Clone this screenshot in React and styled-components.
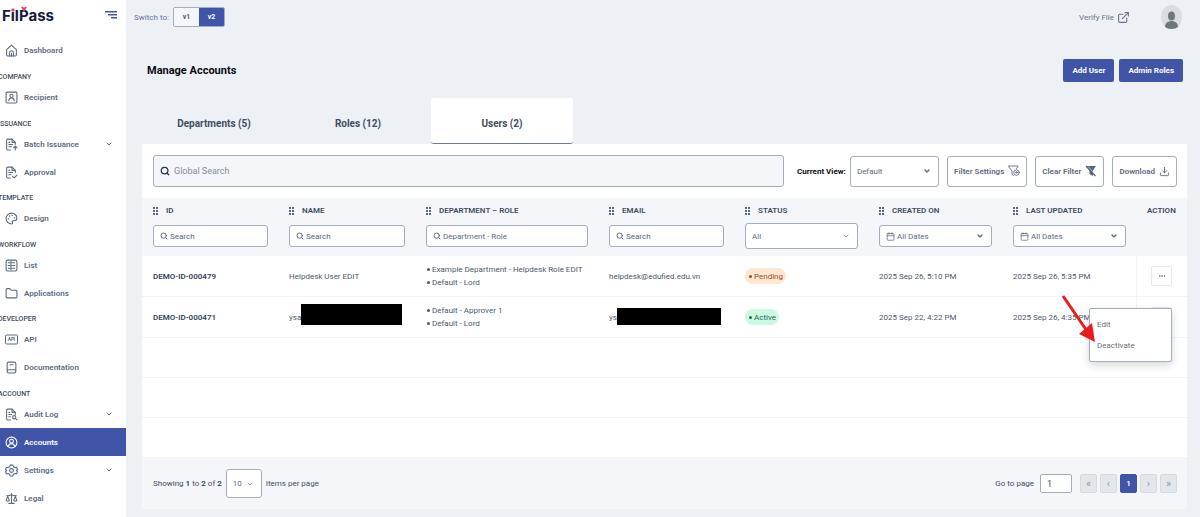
import React, { useState } from "react";
import styled, { createGlobalStyle } from "styled-components";
import {
  Palette,
  Folder,
  Scale,
  Search,
  ChevronDown,
  Ellipsis,
  ExternalLink,
  Download,
  Calendar,
} from "lucide-react";

const navSections = [
  { title: "", items: [{ label: "Dashboard", icon: "home" }] },
  { title: "COMPANY", items: [{ label: "Recipient", icon: "recipient" }] },
  {
    title: "ISSUANCE",
    items: [
      { label: "Batch Issuance", icon: "batch", open: true },
      { label: "Approval", icon: "approval" },
    ],
  },
  {
    title: "TEMPLATE",
    tight: true,
    items: [{ label: "Design", icon: "design" }],
  },
  {
    title: "WORKFLOW",
    items: [
      { label: "List", icon: "list" },
      { label: "Applications", icon: "folder" },
    ],
  },
  {
    title: "DEVELOPER",
    tight: true,
    items: [
      { label: "API", icon: "api" },
      { label: "Documentation", icon: "docs" },
    ],
  },
  {
    title: "ACCOUNT",
    items: [
      { label: "Audit Log", icon: "audit", open: true },
      { label: "Accounts", icon: "accounts", active: true },
      { label: "Settings", icon: "settings", open: true },
      { label: "Legal", icon: "legal" },
    ],
  },
];

const tabs = ["Departments (5)", "Roles (12)", "Users (2)"];

const columns = [
  { title: "ID", width: 136, type: "search", hint: "Search" },
  { title: "NAME", width: 137, type: "search", hint: "Search" },
  {
    title: "DEPARTMENT – ROLE",
    width: 183,
    type: "search",
    hint: "Department - Role",
  },
  { title: "EMAIL", width: 136, type: "search", hint: "Search" },
  { title: "STATUS", width: 134, type: "status" },
  { title: "CREATED ON", width: 134, type: "date" },
  { title: "LAST UPDATED", width: 134, type: "date" },
];

const users = [
  {
    id: "DEMO-ID-000479",
    name: "Helpdesk User EDIT",
    roles: ["Example Department - Helpdesk Role EDIT", "Default - Lord"],
    email: "helpdesk@edufied.edu.vn",
    status: "Pending",
    created: "2025 Sep 26, 5:10 PM",
    updated: "2025 Sep 26, 5:35 PM",
  },
  {
    id: "DEMO-ID-000471",
    name: "ysa",
    roles: ["Default - Approver 1", "Default - Lord"],
    email: "ys",
    hidden: true,
    status: "Active",
    created: "2025 Sep 22, 4:22 PM",
    updated: "2025 Sep 26, 4:35 PM",
  },
];

const Line = ({ children, size = 13, width = 2 }) => (
  <svg
    width={size}
    height={size}
    viewBox="0 0 24 24"
    fill="none"
    stroke="currentColor"
    strokeWidth={width}
    strokeLinecap="round"
    strokeLinejoin="round"
  >
    {children}
  </svg>
);

const filePath = "M10 22H5a2 2 0 0 1-2-2V4a2 2 0 0 1 2-2h8l6 6v4";

const NavIcon = ({ name }) => {
  switch (name) {
    case "home":
      return (
        <Line>
          <path d="M3 10.500 12 2l9 8.500V20a2 2 0 0 1-2 2H5a2 2 0 0 1-2-2z" />
          <path d="M8.500 22v-6a3.500 3.500 0 0 1 7 0v6M12 22v-5" />
        </Line>
      );
    case "recipient":
      return (
        <Line>
          <rect x="2" y="2" width="20" height="20" rx="2" />
          <circle cx="12" cy="9" r="3" />
          <path d="M7 18c0-3 2-5 5-5s5 2 5 5" />
        </Line>
      );
    case "batch":
      return (
        <Line>
          <path d={filePath} />
          <path d="M13 2v6h6M7 12h7M7 16h5M7 8h2M19 22v-7M16 18l3-3 3 3" />
        </Line>
      );
    case "approval":
      return (
        <Line>
          <path d={filePath} />
          <path d="M13 2v6h6M7 12h7M7 16h4M7 8h2M14 19l3 3 5-5" />
        </Line>
      );
    case "design":
      return <Palette size={13} />;
    case "list":
      return (
        <Line>
          <rect x="2" y="2" width="20" height="20" rx="3" />
          <path d="M6 7h3M13 7h5M6 12h3M13 12h5M6 17h3M13 17h5M11 4v16" />
        </Line>
      );
    case "folder":
      return <Folder size={13} />;
    case "api":
      return (
        <svg width="13" height="11" viewBox="0 0 26 22">
          <rect
            x="1"
            y="2"
            width="24"
            height="18"
            rx="2"
            fill="none"
            stroke="currentColor"
            strokeWidth="2"
          />
          <text
            x="13"
            y="14"
            textAnchor="middle"
            fontSize="9"
            fontWeight="700"
            fill="currentColor"
          >
            API
          </text>
        </svg>
      );
    case "docs":
      return (
        <Line>
          <path d="M4 19V5a3 3 0 0 1 3-3h10a3 3 0 0 1 3 3v14a3 3 0 0 1-3 3H7a3 3 0 0 1 0-6h13M9 7h6" />
        </Line>
      );
    case "audit":
      return (
        <Line>
          <path d={filePath} />
          <path d="M13 2v6h6M7 12h5M7 16h3M7 8h2M20 20l2 2" />
          <circle cx="17" cy="17" r="3" />
        </Line>
      );
    case "accounts":
      return (
        <Line>
          <circle cx="12" cy="12" r="10" />
          <circle cx="12" cy="9.500" r="3.500" />
          <path d="M6 19c1-3 3-5 6-5s5 2 6 5" />
        </Line>
      );
    case "settings":
      return (
        <Line>
          <path d="M9.500 2h5l1 3 3 1.500 3-.5 1.500 4-2 2 2 2-1.500 4-3-.5-3 1.500-1 3h-5l-1-3-3-1.500-3 .5L1 14l2-2-2-2 1.500-4 3 .5 3-1.500z" />
          <circle cx="12" cy="12" r="3.500" />
        </Line>
      );
    default:
      return <Scale size={13} />;
  }
};

const DragDots = () => (
  <svg width="5" height="8" viewBox="0 0 5 8" fill="#5a687c">
    {[0, 3, 6].map((y) => (
      <React.Fragment key={y}>
        <rect x="0" y={y} width="2" height="2" />
        <rect x="3" y={y} width="2" height="2" />
      </React.Fragment>
    ))}
  </svg>
);

const FunnelGear = () => (
  <Line size={12} width={1.8}>
    <path d="M11 21l-3-2v-7L1 3V2h19v1l-3 4" />
    <circle cx="17" cy="15" r="5.500" />
    <circle cx="17" cy="15" r="1.500" />
  </Line>
);

const FunnelOff = () => (
  <svg width="12" height="12" viewBox="0 0 24 24">
    <path d="M3 2h19l-6 9v11l-7-4v-7L2 3z" fill="#55647a" />
    <path d="M6 3l16 17" stroke="#fff" strokeWidth="1.500" />
    <path d="M2 2l19 20" stroke="#55647a" strokeWidth="2.500" />
  </svg>
);

const SelectField = ({ id, label, options, icon, size, bold }) => (
  <Field $size={size}>
    {icon}
    <FieldSelect id={id} aria-label={label}>
      {options.map((option) => (
        <option key={option}>{option}</option>
      ))}
    </FieldSelect>
    <ChevronDown size={8} strokeWidth={bold ? 4 : 2} />
  </Field>
);

const ColumnFilter = ({ column }) => {
  if (column.type === "search") {
    return (
      <Field>
        <Search size={8} strokeWidth={3} />
        <FieldInput
          type="text"
          placeholder={column.hint}
          aria-label={`Filter ${column.title}`}
        />
      </Field>
    );
  }
  if (column.type === "status") {
    return (
      <SelectField
        label="Filter status"
        size="medium"
        options={["All", "Pending", "Active"]}
      />
    );
  }
  return (
    <SelectField
      label={`Filter ${column.title}`}
      icon={<Calendar size={9} />}
      options={["All Dates", "Last 7 days"]}
      bold
    />
  );
};

const Sidebar = () => (
  <SidebarStyle>
    <SidebarTop>
      <Logo href="#home">
        FilPass
        <LogoMark viewBox="0 0 16 10" width="16" height="10">
          <circle cx="2" cy="4" r="1.500" fill="#ef4358" />
          <path d="M10 1q2-1 3 1Q14 0 16 1L13 6z" fill="#ef4358" />
        </LogoMark>
      </Logo>
      <MenuButton type="button" aria-label="Collapse menu">
        <svg width="12" height="10" viewBox="0 0 12 10" fill="#4254a8">
          <rect x="0" y="0" width="12" height="1.500" />
          <rect x="3" y="3" width="9" height="1.500" />
          <rect x="6" y="6" width="6" height="1.500" />
        </svg>
      </MenuButton>
    </SidebarTop>
    <nav>
      {navSections.map((section) => (
        <div key={section.title}>
          {section.title && (
            <SectionTitle $tight={section.tight}>{section.title}</SectionTitle>
          )}
          {section.items.map((item) => (
            <NavItem
              key={item.label}
              href={`#${item.icon}`}
              $active={item.active}
            >
              <NavIcon name={item.icon} />
              <span>{item.label}</span>
              {item.open && <ChevronDown size={8} strokeWidth={3} />}
            </NavItem>
          ))}
        </div>
      ))}
    </nav>
  </SidebarStyle>
);

const UserRow = ({ user, menuOpen, onToggle }) => (
  <tr>
    <BodyCell>
      <strong>{user.id}</strong>
    </BodyCell>
    <BodyCell>
      <Masked>
        {user.name}
        {user.hidden && <MaskBar $width={101} $height={21} $lift={6} />}
      </Masked>
    </BodyCell>
    <BodyCell>
      <RoleList>
        {user.roles.map((role) => (
          <li key={role}>
            <Dot />
            {role}
          </li>
        ))}
      </RoleList>
    </BodyCell>
    <BodyCell>
      <Masked>
        {user.email}
        {user.hidden && <MaskBar $width={104} $height={17} $lift={2} />}
      </Masked>
    </BodyCell>
    <BodyCell>
      <StatusPill $status={user.status}>
        <Dot />
        {user.status}
      </StatusPill>
    </BodyCell>
    <BodyCell>{user.created}</BodyCell>
    <BodyCell>{user.updated}</BodyCell>
    <ActionCell>
      <MoreButton type="button" aria-label="Actions" onClick={onToggle}>
        <Ellipsis size={8} />
      </MoreButton>
      {menuOpen && (
        <>
          <ActionMenu>
            <button type="button">Edit</button>
            <button type="button">Deactivate</button>
          </ActionMenu>
          <Pointer width="40" height="52" viewBox="0 0 40 52">
            <path d="M3 4L27 39" stroke="#e81c1c" strokeWidth="3" />
            <path d="M35 50L19 42L32 31z" fill="#e81c1c" />
          </Pointer>
        </>
      )}
    </ActionCell>
  </tr>
);

const App = () => {
  const [activeTab, setActiveTab] = useState("Users (2)");
  const [openMenu, setOpenMenu] = useState("DEMO-ID-000471");
  const [version, setVersion] = useState("v2");

  return (
    <Page>
      <GlobalStyle />
      <Sidebar />
      <Main>
        <TopBar>
          <span>Switch to:</span>
          <VersionToggle>
            {["v1", "v2"].map((v) => (
              <VersionButton
                key={v}
                type="button"
                $active={version === v}
                onClick={() => setVersion(v)}
              >
                {v}
              </VersionButton>
            ))}
          </VersionToggle>
          <VerifyLink href="#verify">
            Verify File
            <ExternalLink size={13} />
          </VerifyLink>
          <Avatar type="button" aria-label="Profile">
            <svg width="21" height="24" viewBox="0 0 21 24">
              <ellipse cx="10.500" cy="12" rx="10.500" ry="12" fill="#d9dce0" />
              <ellipse cx="10.500" cy="11" rx="3.500" ry="4.500" fill="#6f777c" />
              <path
                d="M4 22c0-8 13-8 13 0-3 2.500-10 2.500-13 0z"
                fill="#6f777c"
              />
            </svg>
          </Avatar>
        </TopBar>

        <TitleRow>
          <h1>Manage Accounts</h1>
          <PrimaryButton type="button">Add User</PrimaryButton>
          <PrimaryButton type="button">Admin Roles</PrimaryButton>
        </TitleRow>

        <Tabs role="tablist">
          {tabs.map((tab) => (
            <Tab
              key={tab}
              type="button"
              role="tab"
              aria-selected={activeTab === tab}
              $active={activeTab === tab}
              onClick={() => setActiveTab(tab)}
            >
              {tab}
            </Tab>
          ))}
        </Tabs>

        <Card>
          <Toolbar>
            <GlobalSearch>
              <Search size={10} strokeWidth={3} />
              <FieldInput
                type="text"
                placeholder="Global Search"
                aria-label="Global Search"
              />
            </GlobalSearch>
            <ViewPicker>
              <label htmlFor="current-view">Current View:</label>
              <SelectField
                id="current-view"
                size="large"
                options={["Default", "Custom"]}
                bold
              />
            </ViewPicker>
            <OutlineButton type="button">
              Filter Settings <FunnelGear />
            </OutlineButton>
            <OutlineButton type="button">
              Clear Filter <FunnelOff />
            </OutlineButton>
            <OutlineButton type="button">
              Download <Download size={11} />
            </OutlineButton>
          </Toolbar>

          <Table>
            <colgroup>
              {columns.map((column) => (
                <col key={column.title} width={column.width} />
              ))}
              <col width={51} />
            </colgroup>
            <thead>
              <tr>
                {columns.map((column) => (
                  <HeadCell key={column.title}>
                    <HeadLabel>
                      <DragDots />
                      {column.title}
                    </HeadLabel>
                    <FilterSlot>
                      <ColumnFilter column={column} />
                    </FilterSlot>
                  </HeadCell>
                ))}
                <HeadCell>
                  <HeadLabel>ACTION</HeadLabel>
                </HeadCell>
              </tr>
            </thead>
            <tbody>
              {users.map((user) => (
                <UserRow
                  key={user.id}
                  user={user}
                  menuOpen={openMenu === user.id}
                  onToggle={() =>
                    setOpenMenu(openMenu === user.id ? null : user.id)
                  }
                />
              ))}
              {[1, 2, 3].map((n) => (
                <tr key={n}>
                  <EmptyCell colSpan={columns.length + 1} />
                </tr>
              ))}
            </tbody>
          </Table>

          <TableFooter>
            <span>
              Showing <b>1</b> to <b>2</b> of <b>2</b>
            </span>
            <PageSize>
              <SelectField
                id="page-size"
                size="page"
                options={["10", "25", "50"]}
              />
            </PageSize>
            <label htmlFor="page-size">Items per page</label>
            <Pager>
              <label htmlFor="go-to">Go to page</label>
              <PageInput id="go-to" type="text" defaultValue="1" />
              <PageButton type="button">«</PageButton>
              <PageButton type="button">‹</PageButton>
              <PageButton type="button" $active>
                1
              </PageButton>
              <PageButton type="button">›</PageButton>
              <PageButton type="button">»</PageButton>
            </Pager>
          </TableFooter>
        </Card>
      </Main>
    </Page>
  );
};

const GlobalStyle = createGlobalStyle`
  * {
    box-sizing: border-box;
  }
  body {
    margin: 0;
    background-color: #edf0f5;
    color: #4b5a6e;
    font-family: Roboto, "Liberation Sans", sans-serif;
    font-size: 8px;
    line-height: 13px;
  }
  button, input, select {
    font: inherit;
    color: inherit;
    margin: 0;
    padding: 0;
    border: 0;
  }
  button {
    cursor: pointer;
  }
  a {
    color: inherit;
    text-decoration: none;
  }
  svg {
    flex: none;
  }
`;

const Page = styled.div`
  display: flex;
  min-height: 100vh;
`;

const SidebarStyle = styled.aside`
  flex: none;
  width: 126px;
  background-color: #fff;
  overflow: hidden;
`;

const SidebarTop = styled.div`
  display: flex;
  align-items: center;
  justify-content: space-between;
  height: 36px;
  padding: 0 9px 4px 2px;
`;

const Logo = styled.a`
  position: relative;
  color: #14183c;
  font-family: Inter, sans-serif;
  font-size: 15px;
  line-height: 20px;
  font-weight: 700;
`;

const LogoMark = styled.svg`
  position: absolute;
  top: 0;
  left: 9px;
`;

const MenuButton = styled.button`
  display: flex;
  background: none;
`;

const SectionTitle = styled.div`
  display: flex;
  align-items: flex-end;
  height: ${(props) => (props.$tight ? 18 : 19)}px;
  margin-left: -2px;
  color: #3f4d60;
  font-size: 7px;
  line-height: 11px;
  font-weight: 500;
`;

const NavItem = styled.a`
  display: flex;
  align-items: center;
  gap: 6px;
  height: 28px;
  padding: 0 13px 0 5px;
  font-weight: 600;
  color: ${(props) => (props.$active ? "#fff" : "#5c6b7f")};
  background-color: ${(props) => (props.$active ? "#4054a8" : "transparent")};

  span {
    flex: 1;
  }
`;

const Main = styled.main`
  flex: 1;
  min-width: 0;
  padding: 0 13px 8px 16px;
`;

const TopBar = styled.header`
  display: flex;
  align-items: center;
  height: 34px;
  margin-left: -8px;
  color: #6572ad;
`;

const VersionToggle = styled.div`
  display: flex;
  height: 20px;
  margin-left: 4px;
  border: 1px solid #a3adbd;
  border-radius: 2px;
  overflow: hidden;
`;

const VersionButton = styled.button`
  width: 25px;
  font-weight: 700;
  font-size: 7px;
  color: ${(props) => (props.$active ? "#fff" : "#4b5a6e")};
  background-color: ${(props) => (props.$active ? "#4054a8" : "#f4f6fa")};
`;

const VerifyLink = styled.a`
  display: flex;
  align-items: center;
  gap: 3px;
  margin-left: auto;
  color: #66748a;
`;

const Avatar = styled.button`
  display: flex;
  margin: 0 5px 0 31px;
  background: none;
`;

const TitleRow = styled.div`
  display: flex;
  align-items: center;
  gap: 5px;
  height: 64px;
  padding: 9px 4px 0 5px;

  h1 {
    flex: 1;
    margin: 0;
    color: #0b0d12;
    font-size: 11px;
    line-height: 18px;
    font-weight: 700;
  }
`;

const PrimaryButton = styled.button`
  height: 23px;
  padding: 0 9px;
  border-radius: 2px;
  background-color: #4054a8;
  color: #fff;
  font-weight: 700;
`;

const Tabs = styled.div`
  display: flex;
  gap: 2px;
  padding-left: 1px;
`;

const Tab = styled.button`
  width: 142px;
  height: 46px;
  padding-top: 6px;
  border-bottom: 1px solid ${(props) => (props.$active ? "#6b7a90" : "#edf0f5")};
  border-radius: 3px;
  background-color: ${(props) => (props.$active ? "#fff" : "transparent")};
  color: #3f4d60;
  font-size: 10px;
  font-weight: 700;
`;

const Card = styled.section`
  background-color: #fff;
`;

const Toolbar = styled.div`
  display: flex;
  align-items: center;
  gap: 8px;
  padding: 11px 10px 11px 11px;
`;

const fieldHeights = { small: 22, medium: 26, large: 31, page: 29 };

const Field = styled.div`
  display: flex;
  flex: 1;
  align-items: center;
  gap: 2px;
  height: ${(props) => fieldHeights[props.$size || "small"]}px;
  padding: 0 7px 0 6px;
  border: 1px solid #a3adbd;
  border-radius: 3px;
  background-color: #fff;
  color: #5c6b7f;
`;

const FieldInput = styled.input`
  flex: 1;
  width: 100%;
  min-width: 0;
  background: none;
  outline: none;

  &::placeholder {
    color: inherit;
    opacity: 1;
  }
`;

const FieldSelect = styled.select`
  flex: 1;
  width: 100%;
  min-width: 0;
  appearance: none;
  background: none;
  outline: none;
`;

const GlobalSearch = styled.div`
  display: flex;
  flex: 1;
  align-items: center;
  gap: 4px;
  height: 32px;
  padding: 0 6px;
  border: 1px solid #a3adbd;
  border-radius: 3px;
  background-color: #f5f6fa;
  color: #2c3645;

  input {
    color: #838c9d;
    font-size: 9px;
  }
`;

const ViewPicker = styled.div`
  display: flex;
  align-items: center;
  gap: 4px;
  width: 142px;
  margin-left: 5px;

  label {
    color: #0b0d12;
    font-weight: 700;
    white-space: nowrap;
  }
`;

const OutlineButton = styled.button`
  display: flex;
  align-items: center;
  gap: 4px;
  height: 31px;
  padding: 0 6px;
  border: 1px solid #a3adbd;
  border-radius: 3px;
  background-color: #fff;
  color: #5c6b7f;
  font-weight: 600;
  white-space: nowrap;
`;

const Table = styled.table`
  width: 100%;
  table-layout: fixed;
  border-collapse: separate;
  border-spacing: 0;
`;

const HeadCell = styled.th`
  height: 58px;
  padding: 6px 10px 0 11px;
  background-color: #f4f6fa;
  text-align: left;
  vertical-align: top;
  font-weight: 400;
`;

const HeadLabel = styled.div`
  display: flex;
  align-items: center;
  gap: 8px;
  color: #3f4d60;
  font-weight: 600;
  white-space: nowrap;
`;

const FilterSlot = styled.div`
  display: flex;
  align-items: center;
  height: 26px;
  margin-top: 6px;
`;

const BodyCell = styled.td`
  height: 41px;
  padding: 0 0 0 11px;
  border-bottom: 1px solid #f1f3f7;
  white-space: nowrap;

  strong {
    color: #34435a;
    font-weight: 600;
  }
`;

const EmptyCell = styled.td`
  height: 40px;
  padding: 0;
  border-bottom: 1px solid #f1f3f7;
`;

const RoleList = styled.ul`
  margin: 0;
  padding: 0;
  list-style: none;
`;

const Dot = styled.span`
  display: inline-block;
  width: 3px;
  height: 3px;
  margin: 0 2px 0 1px;
  border-radius: 50%;
  background-color: currentColor;
  vertical-align: middle;
`;

const Masked = styled.div`
  display: flex;
  align-items: center;
`;

const MaskBar = styled.span`
  width: ${(props) => props.$width}px;
  height: ${(props) => props.$height}px;
  margin-bottom: ${(props) => props.$lift}px;
  background-color: #000;
`;

const StatusPill = styled.span`
  display: inline-block;
  height: 16px;
  padding: 0 3px;
  border-radius: 8px;
  line-height: 17px;
  color: ${(props) => (props.$status === "Active" ? "#1d6b50" : "#9c4a2c")};
  background-color: ${(props) =>
    props.$status === "Active" ? "#cdf8e2" : "#ffe8cf"};
`;

const ActionCell = styled(BodyCell)`
  position: relative;
  padding: 0 14px;
  border-left: 1px solid #f1f3f7;
`;

const MoreButton = styled.button`
  display: flex;
  align-items: center;
  justify-content: center;
  width: 21px;
  height: 20px;
  border: 1px solid #e6e9ef;
  border-radius: 2px;
  background-color: #fff;
`;

const ActionMenu = styled.div`
  position: absolute;
  top: 11px;
  right: 15px;
  width: 83px;
  padding: 5px 7px;
  border: 1px solid #a3adbd;
  border-radius: 2px;
  background-color: #fff;
  box-shadow: 0 3px 8px rgba(40, 50, 70, 0.2);

  button {
    display: block;
    width: 100%;
    height: 21px;
    background: none;
    color: #6d6f74;
    text-align: left;
  }
`;

const Pointer = styled.svg`
  position: absolute;
  top: -5px;
  right: 87px;
  pointer-events: none;
`;

const TableFooter = styled.div`
  display: flex;
  align-items: center;
  gap: 4px;
  height: 51px;
  padding: 0 10px 0 11px;
  background-color: #f4f6fa;
  color: #3f4d60;
`;

const PageSize = styled.div`
  display: flex;
  width: 36px;
`;

const Pager = styled.div`
  display: flex;
  align-items: center;
  gap: 3px;
  margin-left: auto;
`;

const PageInput = styled.input`
  width: 32px;
  height: 19px;
  margin: 0 5px 0 3px;
  padding: 0 6px;
  border: 1px solid #a3adbd;
  border-radius: 2px;
  background-color: #fff;
  font-size: 9px;
`;

const PageButton = styled.button`
  width: 17px;
  height: 19px;
  border: 1px solid ${(props) => (props.$active ? "#4054a8" : "#d5dae1")};
  border-radius: 2px;
  background-color: ${(props) => (props.$active ? "#4054a8" : "#e3e7ec")};
  color: ${(props) => (props.$active ? "#fff" : "#8c97a8")};
  font-size: ${(props) => (props.$active ? 8 : 11)}px;
  font-weight: ${(props) => (props.$active ? 600 : 400)};
`;

export default App;
